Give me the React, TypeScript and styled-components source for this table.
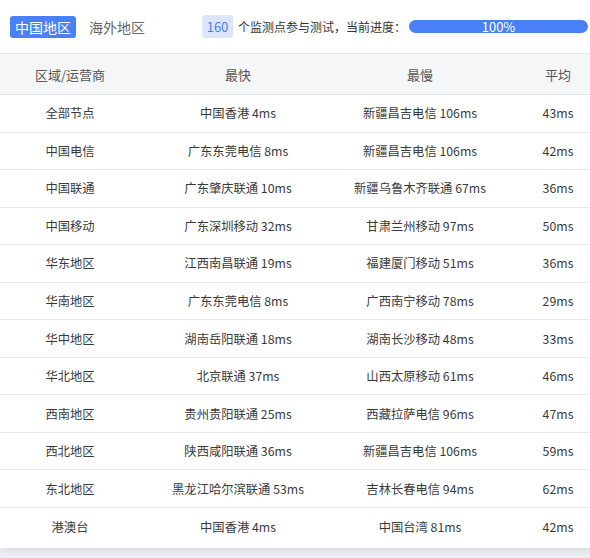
import React from "react";
import styled, { createGlobalStyle } from "styled-components";

const Global = createGlobalStyle`
  html, body { margin: 0; padding: 0; overflow: hidden; }
  body {
    background: #eef0f4;
    font-family: "Noto Sans CJK SC", "Noto Sans", sans-serif;
    color: #333;
  }
`;

const Page = styled.div`
  width: 590px;
  height: 558px;
  overflow: hidden;
`;

const Card = styled.div`
  width: 612px;
  background: #fff;
  padding-bottom: 3px;
  box-shadow: 0 3px 8px rgba(60, 70, 90, 0.12);
`;

const TopBar = styled.div`
  height: 54px;
  display: flex;
  align-items: center;
  padding: 0 10px;
  border-bottom: 1px solid #e4e8ee;
  box-sizing: border-box;
`;

const Tab = styled.div<{ $active?: boolean }>`
  height: 22px;
  padding: 0 5px;
  margin-right: ${(p) => (p.$active ? "8px" : "52px")};
  border-radius: 3px;
  display: flex;
  align-items: center;
  font-size: 14px;
  background: ${(p) => (p.$active ? "#4a80f6" : "transparent")};
  color: ${(p) => (p.$active ? "#fff" : "#666")};
`;

const Badge = styled.div`
  height: 23px;
  min-width: 31px;
  box-sizing: border-box;
  padding: 0 4px;
  border-radius: 3px;
  background: #dbe6fd;
  color: #4a80f6;
  font-size: 13px;
  display: flex;
  align-items: center;
  justify-content: center;
  margin-right: 5px;
`;

const Info = styled.span`
  font-size: 12px;
  color: #333;
  white-space: nowrap;
`;

const Progress = styled.div`
  margin-left: 3px;
  width: 179px;
  flex-shrink: 0;
  height: 13px;
  border-radius: 6.5px;
  background: #4a80f6;
  color: #fff;
  font-size: 13px;
  line-height: 13px;
  display: flex;
  align-items: center;
  justify-content: center;
`;

const Table = styled.table`
  width: 612px;
  border-collapse: collapse;
  table-layout: fixed;
`;

const Th = styled.th`
  height: 40px;
  background: #f5f6f7;
  font-weight: normal;
  font-size: 13px;
  color: #555;
  text-align: center;
  border-bottom: 1px solid #e4e8ee;
  padding: 0;
`;

const Tr = styled.tr`
  height: 37.55px;
  border-bottom: 1px solid #e6eaf0;
  &:last-child { border-bottom: none; }
`;

const Td = styled.td`
  text-align: center;
  font-size: 12.3px;
  color: #3a3a3a;
  padding: 0;
  white-space: nowrap;
`;

const rows: [string, string, string, string][] = [
  ["全部节点", "中国香港 4ms", "新疆昌吉电信 106ms", "43ms"],
  ["中国电信", "广东东莞电信 8ms", "新疆昌吉电信 106ms", "42ms"],
  ["中国联通", "广东肇庆联通 10ms", "新疆乌鲁木齐联通 67ms", "36ms"],
  ["中国移动", "广东深圳移动 32ms", "甘肃兰州移动 97ms", "50ms"],
  ["华东地区", "江西南昌联通 19ms", "福建厦门移动 51ms", "36ms"],
  ["华南地区", "广东东莞电信 8ms", "广西南宁移动 78ms", "29ms"],
  ["华中地区", "湖南岳阳联通 18ms", "湖南长沙移动 48ms", "33ms"],
  ["华北地区", "北京联通 37ms", "山西太原移动 61ms", "46ms"],
  ["西南地区", "贵州贵阳联通 25ms", "西藏拉萨电信 96ms", "47ms"],
  ["西北地区", "陕西咸阳联通 36ms", "新疆昌吉电信 106ms", "59ms"],
  ["东北地区", "黑龙江哈尔滨联通 53ms", "吉林长春电信 94ms", "62ms"],
  ["港澳台", "中国香港 4ms", "中国台湾 81ms", "42ms"],
];

export default function App() {
  return (
    <>
      <Global />
      <Page>
        <Card>
          <TopBar>
            <Tab $active>中国地区</Tab>
            <Tab>海外地区</Tab>
            <Badge>160</Badge>
            <Info>个监测点参与测试，当前进度：</Info>
            <Progress>100%</Progress>
          </TopBar>
          <Table>
            <colgroup>
              <col style={{ width: 140 }} />
              <col style={{ width: 196 }} />
              <col style={{ width: 168 }} />
              <col style={{ width: 108 }} />
            </colgroup>
            <thead>
              <tr>
                <Th>区域/运营商</Th>
                <Th>最快</Th>
                <Th>最慢</Th>
                <Th>平均</Th>
              </tr>
            </thead>
            <tbody>
              {rows.map((r) => (
                <Tr key={r[0]}>
                  {r.map((c, i) => (
                    <Td key={i}>{c}</Td>
                  ))}
                </Tr>
              ))}
            </tbody>
          </Table>
        </Card>
      </Page>
    </>
  );
}
